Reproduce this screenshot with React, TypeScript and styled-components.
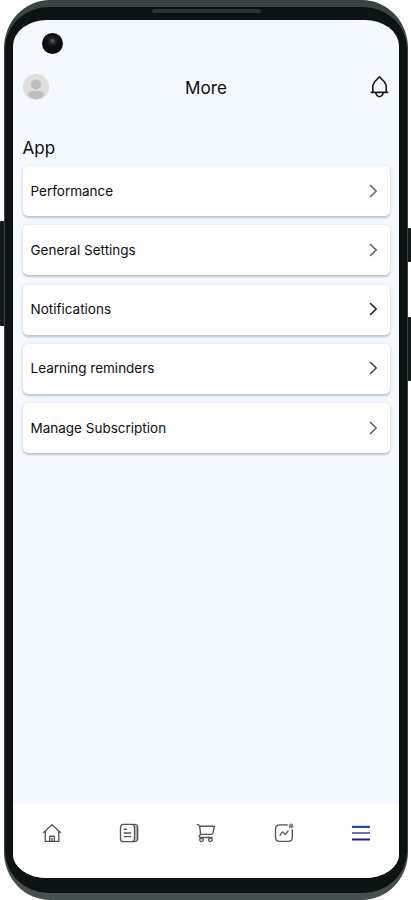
import React from "react";
import styled, { createGlobalStyle } from "styled-components";

const GlobalStyle = createGlobalStyle`
  * { box-sizing: border-box; }
  html, body { margin: 0; padding: 0; background: #fff; overflow: hidden; }
  body { font-family: Inter, "Liberation Sans", sans-serif; color: #0c0d0f; }
`;

const Stage = styled.div`
  position: relative;
  width: 411px;
  height: 900px;
  overflow: hidden;
`;

const SideKey = styled.span<{ $side: "left" | "right"; $top: number; $height: number }>`
  position: absolute;
  ${(p) => p.$side}: 0;
  top: ${(p) => p.$top}px;
  width: 6px;
  height: ${(p) => p.$height}px;
  background: #131a1a;
  border-radius: 1px;
`;

const Shell = styled.div`
  position: relative;
  width: 404px;
  height: 900px;
  margin-left: 4px;
  padding: 7px 1px 7px;
  border-radius: 46px / 48px;
  background: linear-gradient(#394342, #3d4746 50px, #3d4746 850px, #465150);
`;

const Bezel = styled.div`
  height: 100%;
  padding: 13px 8px 15px 8px;
  border-radius: 44px / 42px;
  background: #0d1212;
`;

const Speaker = styled.span`
  position: absolute;
  top: 9px;
  left: 148px;
  width: 109px;
  height: 4px;
  border-radius: 2px;
  background: #2b3433;
`;

const Screen = styled.main`
  position: relative;
  display: flex;
  flex-direction: column;
  height: 100%;
  width: 386px;
  overflow: hidden;
  border-radius: 34px 34px 34px 34px / 26px 26px 24px 24px;
  background: #f4f8ff;
`;

const Camera = styled.span`
  position: absolute;
  top: 13px;
  left: 29px;
  width: 21px;
  height: 21px;
  border-radius: 50%;
  background: radial-gradient(circle at 50% 38%, #4b5151 0 1px, #202526 3px, #0b0f10 6px);
`;

const Header = styled.header`
  display: grid;
  grid-template-columns: 26px 1fr 26px;
  align-items: center;
  margin: 53px 7px 0 10px;
  height: 28px;
`;

const Title = styled.h1`
  margin: 1px 3px 0 0;
  font-size: 17.1px;
  line-height: 24px;
  font-weight: 400;
  text-align: center;
`;

const Section = styled.section`
  padding: 35px 10px 0 9.5px;
`;

const SectionTitle = styled.h2`
  margin: 0 0 6px;
  font-size: 17px;
  line-height: 24px;
  font-weight: 400;
`;

const List = styled.nav`
  display: flex;
  flex-direction: column;
  gap: 9.3px;
`;

const Row = styled.button`
  display: flex;
  align-items: center;
  justify-content: space-between;
  width: 367px;
  height: 50px;
  padding: 0 10px 1px 8px;
  border: 0;
  border-radius: 5px;
  background: #fff;
  box-shadow: 0 1.5px 2px rgba(40, 50, 65, 0.23), 0 0 4px rgba(40, 50, 65, 0.07);
  color: #0c0d0f;
  font: 400 13.5px/20px Inter, "Liberation Sans", sans-serif;
`;

const Tabs = styled.nav`
  display: grid;
  grid-template-columns: repeat(5, 77.3px);
  align-items: start;
  justify-items: center;
  height: 74px;
  margin-top: auto;
  padding-top: 18px;
  background: #fff;
`;

const Icon = styled.svg<{ $tone?: string; $weight?: number }>`
  display: block;
  fill: none;
  stroke: ${(p) => p.$tone ?? "#55555c"};
  stroke-width: ${(p) => p.$weight ?? 1.35};
  stroke-linecap: round;
  stroke-linejoin: round;
`;

const entries = [
  { label: "Performance", tone: "#606060" },
  { label: "General Settings", tone: "#606060" },
  { label: "Notifications", tone: "#17191c" },
  { label: "Learning reminders", tone: "#404040" },
  { label: "Manage Subscription", tone: "#606060" },
];

const Avatar = () => (
  <svg width="26" height="26" viewBox="0 0 26 26">
    <circle cx="13" cy="13" r="13" fill="#dedede" />
    <circle cx="13" cy="10.4" r="5" fill="#bdbdbd" />
    <path d="M5 21.2c0-3 2.7-4.2 5-4.2h6c2.3 0 5 1.2 5 4.2-2 2.3-4.8 3.8-8 3.8s-6-1.5-8-3.8z" fill="#bdbdbd" />
  </svg>
);

const Bell = () => (
  <Icon width="26" height="26" viewBox="0 0 26 26" $tone="#17191c" $weight={1.6}>
    <path d="M5.2 18.4h16.5M6.8 18.2V11.500L8.700 7.700 13.500 2.800l4.800 4.900 1.900 3.800v6.700M9.800 18.900c.6 2.500 2 3.700 3.700 3.700s3.100-1.200 3.700-3.700" />
  </Icon>
);

const tabIcons = [
  <Icon key="home" width="22" height="22" viewBox="0 0 22 22">
    <path d="M2.5 10.6 11 2.8l8.5 7.8M4.300 9.400v10h13.500v-10M8.700 19.400v-5.200h4.600v5.200M10.900 16.300v3" />
  </Icon>,
  <Icon key="news" width="22" height="22" viewBox="0 0 22 22">
    <rect x="2.5" y="2.3" width="14" height="17.3" rx="3.2" />
    <path d="M14.5 2.3h1.7c2.3 0 3.5 1.2 3.5 3.4v10.5c0 2.2-1.2 3.4-3.5 3.4h-1.7M6.300 7.200h2M6.300 11h6.400M6.300 14.600h6.400" />
    <path d="M18.1 4v14" stroke="#96969b" />
  </Icon>,
  <Icon key="cart" width="22" height="22" viewBox="0 0 22 22">
    <path d="M2.2 2.4c1.7.2 2.2.8 2.4 2l1.2 8.5M4.800 4.200h14.700l-1.600 6.900c-.2.9-.7 1.200-1.500 1.200H5.800c-2.200.8-2.300 3.200.2 3.200h11M5.600 15.600l1 1" />
    <circle cx="6.5" cy="17.8" r="1.800" />
    <circle cx="15.4" cy="17.8" r="1.800" />
  </Icon>,
  <Icon key="activity" width="22" height="22" viewBox="0 0 22 22">
    <path d="M14.3 2.9H6.800c-3 0-4.300 1.500-4.300 4.300v8c0 2.900 1.300 4.200 4.300 4.200h8.200c3 0 4.300-1.300 4.300-4.200V7.800M7 13.400l2.600-3.500 2.600 2.700L15 9.100" />
    <circle cx="18.1" cy="3.9" r="1.700" fill="#909096" stroke="#85858b" />
  </Icon>,
  <Icon key="menu" width="22" height="22" viewBox="0 0 22 22" $weight={2.2}>
    <g strokeLinecap="butt">
      <path d="M2 4.9h18" stroke="#224ba5" />
      <path d="M2 11h18" stroke="#647ab8" />
      <path d="M2 17.5h18" stroke="#29189b" />
    </g>
  </Icon>,
];

export default function App() {
  return (
    <>
      <GlobalStyle />
      <Stage>
        <SideKey $side="left" $top={221} $height={105} />
        <SideKey $side="right" $top={228} $height={34} />
        <SideKey $side="right" $top={317} $height={64} />
        <Shell>
          <Bezel>
            <Screen>
              <Camera />
              <Header>
                <Avatar />
                <Title>More</Title>
                <Bell />
              </Header>
              <Section>
                <SectionTitle>App</SectionTitle>
                <List>
                  {entries.map(({ label, tone }) => (
                    <Row key={label}>
                      {label}
                      <Icon width="14" height="16" viewBox="0 0 14 16" $tone={tone} $weight={1.6}>
                        <path d="m4.5 2.5 5.7 5.5-5.7 5.5" />
                      </Icon>
                    </Row>
                  ))}
                </List>
              </Section>
              <Tabs>{tabIcons}</Tabs>
            </Screen>
          </Bezel>
          <Speaker />
        </Shell>
      </Stage>
    </>
  );
}
